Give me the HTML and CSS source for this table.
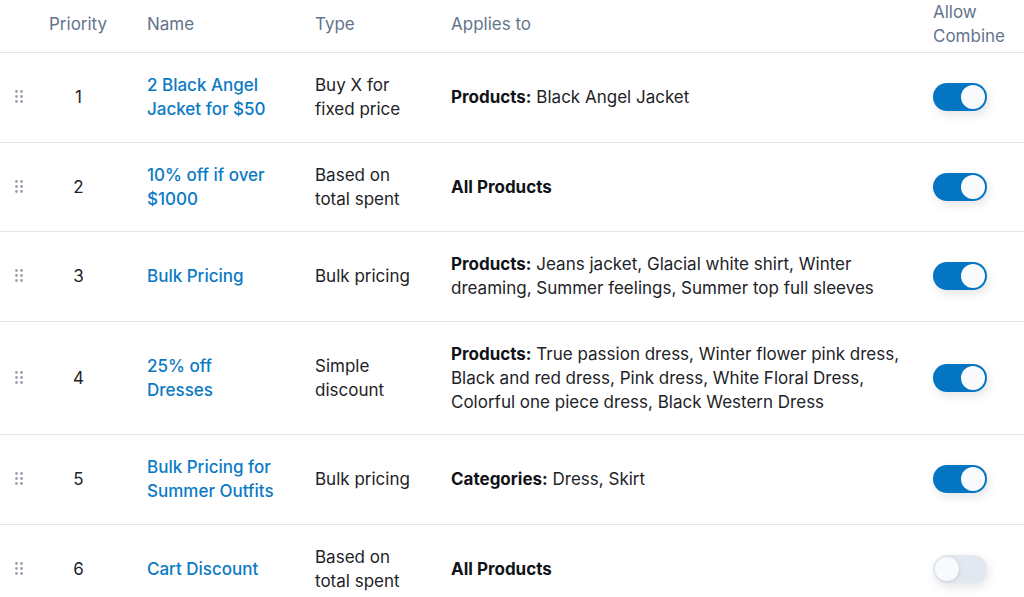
FILE: index.html
```html
<!DOCTYPE html>
<html lang="en">
<head>
<meta charset="utf-8">
<title>Rules</title>
<link rel="stylesheet" href="styles.css">
</head>
<body>
<table class="rules">
  <thead>
    <tr>
      <th class="c-handle"></th>
      <th class="c-priority">Priority</th>
      <th class="c-name">Name</th>
      <th class="c-type">Type</th>
      <th class="c-applies">Applies to</th>
      <th class="c-combine">Allow Combine</th>
    </tr>
  </thead>
  <tbody>
    <tr>
      <td class="c-handle"><svg class="handle" width="9" height="14" viewBox="0 0 9 14"><circle cx="1.5" cy="1.5" r="1.4"/><circle cx="6.5" cy="1.5" r="1.4"/><circle cx="1.5" cy="6.5" r="1.4"/><circle cx="6.5" cy="6.5" r="1.4"/><circle cx="1.5" cy="11.5" r="1.4"/><circle cx="6.5" cy="11.5" r="1.4"/></svg></td>
      <td class="c-priority">1</td>
      <td class="c-name"><a href="#">2 Black Angel Jacket for $50</a></td>
      <td class="c-type">Buy X for fixed price</td>
      <td class="c-applies"><b>Products:</b> Black Angel Jacket</td>
      <td class="c-combine"><span class="toggle on"><span class="knob"></span></span></td>
    </tr>
    <tr>
      <td class="c-handle"><svg class="handle" width="9" height="14" viewBox="0 0 9 14"><circle cx="1.5" cy="1.5" r="1.4"/><circle cx="6.5" cy="1.5" r="1.4"/><circle cx="1.5" cy="6.5" r="1.4"/><circle cx="6.5" cy="6.5" r="1.4"/><circle cx="1.5" cy="11.5" r="1.4"/><circle cx="6.5" cy="11.5" r="1.4"/></svg></td>
      <td class="c-priority">2</td>
      <td class="c-name"><a href="#">10% off if over $1000</a></td>
      <td class="c-type">Based on total spent</td>
      <td class="c-applies"><b>All Products</b></td>
      <td class="c-combine"><span class="toggle on"><span class="knob"></span></span></td>
    </tr>
    <tr>
      <td class="c-handle"><svg class="handle" width="9" height="14" viewBox="0 0 9 14"><circle cx="1.5" cy="1.5" r="1.4"/><circle cx="6.5" cy="1.5" r="1.4"/><circle cx="1.5" cy="6.5" r="1.4"/><circle cx="6.5" cy="6.5" r="1.4"/><circle cx="1.5" cy="11.5" r="1.4"/><circle cx="6.5" cy="11.5" r="1.4"/></svg></td>
      <td class="c-priority">3</td>
      <td class="c-name"><a href="#">Bulk Pricing</a></td>
      <td class="c-type">Bulk pricing</td>
      <td class="c-applies"><b>Products:</b> Jeans jacket, Glacial white shirt, Winter dreaming, Summer feelings, Summer top full sleeves</td>
      <td class="c-combine"><span class="toggle on"><span class="knob"></span></span></td>
    </tr>
    <tr>
      <td class="c-handle"><svg class="handle" width="9" height="14" viewBox="0 0 9 14"><circle cx="1.5" cy="1.5" r="1.4"/><circle cx="6.5" cy="1.5" r="1.4"/><circle cx="1.5" cy="6.5" r="1.4"/><circle cx="6.5" cy="6.5" r="1.4"/><circle cx="1.5" cy="11.5" r="1.4"/><circle cx="6.5" cy="11.5" r="1.4"/></svg></td>
      <td class="c-priority">4</td>
      <td class="c-name"><a href="#">25% off Dresses</a></td>
      <td class="c-type">Simple discount</td>
      <td class="c-applies"><b>Products:</b> True passion dress, Winter flower pink dress, Black and red dress, Pink dress, White Floral Dress, Colorful one piece dress, Black Western Dress</td>
      <td class="c-combine"><span class="toggle on"><span class="knob"></span></span></td>
    </tr>
    <tr>
      <td class="c-handle"><svg class="handle" width="9" height="14" viewBox="0 0 9 14"><circle cx="1.5" cy="1.5" r="1.4"/><circle cx="6.5" cy="1.5" r="1.4"/><circle cx="1.5" cy="6.5" r="1.4"/><circle cx="6.5" cy="6.5" r="1.4"/><circle cx="1.5" cy="11.5" r="1.4"/><circle cx="6.5" cy="11.5" r="1.4"/></svg></td>
      <td class="c-priority">5</td>
      <td class="c-name"><a href="#">Bulk Pricing for Summer Outfits</a></td>
      <td class="c-type">Bulk pricing</td>
      <td class="c-applies"><b>Categories:</b> Dress, Skirt</td>
      <td class="c-combine"><span class="toggle on"><span class="knob"></span></span></td>
    </tr>
    <tr>
      <td class="c-handle"><svg class="handle" width="9" height="14" viewBox="0 0 9 14"><circle cx="1.5" cy="1.5" r="1.4"/><circle cx="6.5" cy="1.5" r="1.4"/><circle cx="1.5" cy="6.5" r="1.4"/><circle cx="6.5" cy="6.5" r="1.4"/><circle cx="1.5" cy="11.5" r="1.4"/><circle cx="6.5" cy="11.5" r="1.4"/></svg></td>
      <td class="c-priority">6</td>
      <td class="c-name"><a href="#">Cart Discount</a></td>
      <td class="c-type">Based on total spent</td>
      <td class="c-applies"><b>All Products</b></td>
      <td class="c-combine"><span class="toggle off"><span class="knob"></span></span></td>
    </tr>
  </tbody>
</table>
</body>
</html>
```

FILE: styles.css
```css
html, body {
  margin: 0;
  padding: 0;
  background: #ffffff;
}

body {
  font-family: Inter, "Noto Sans", "Liberation Sans", sans-serif;
  font-size: 17px;
  line-height: 24px;
  color: #1d2327;
  overflow: hidden;
}

.rules {
  width: 1024px;
  border-collapse: collapse;
  table-layout: fixed;
}

.rules th,
.rules td {
  padding: 0 18px;
  text-align: left;
  vertical-align: middle;
}

.rules th {
  height: 48px;
  padding-bottom: 4px;
  font-weight: 400;
  color: #64748b;
  line-height: 24px;
  border-bottom: 1px solid #e2e7ee;
}

.rules td {
  padding-top: 20px;
  padding-bottom: 20.5px;
  border-bottom: 1px solid #e2e7ee;
}

.c-handle {
  width: 16px;
}
.rules .c-handle {
  padding-left: 15px;
  padding-right: 0;
}

.c-priority {
  width: 59px;
}
.rules .c-priority {
  padding-right: 21px;
}
.rules td.c-priority {
  text-align: center;
}

.c-name {
  width: 132px;
}

.c-type {
  width: 100px;
}

.c-applies {
  width: 456px;
}
.rules .c-applies {
  padding-right: 8px;
}

.c-combine {
  width: auto;
}

.handle {
  display: block;
  fill: #9aa1ad;
}

.c-name a {
  color: #0b7ac4;
  text-decoration: none;
  font-weight: 500;
}

.c-applies b {
  font-weight: 700;
  color: #111318;
}

.toggle {
  display: flex;
  align-items: center;
  width: 54px;
  height: 28px;
  border-radius: 14px;
  padding: 2px;
  box-sizing: border-box;
  box-shadow: 2px 4px 10px rgba(30, 41, 59, 0.12);
}

.toggle .knob {
  width: 24px;
  height: 24px;
  border-radius: 50%;
  background: #f8fafc;
}

.toggle.on {
  background: #0475c3;
  justify-content: flex-end;
}

.toggle.off {
  background: #e2e8f0;
  justify-content: flex-start;
}

.toggle.off .knob {
  box-shadow: 1px 1px 3px rgba(30, 41, 59, 0.12);
}
```
